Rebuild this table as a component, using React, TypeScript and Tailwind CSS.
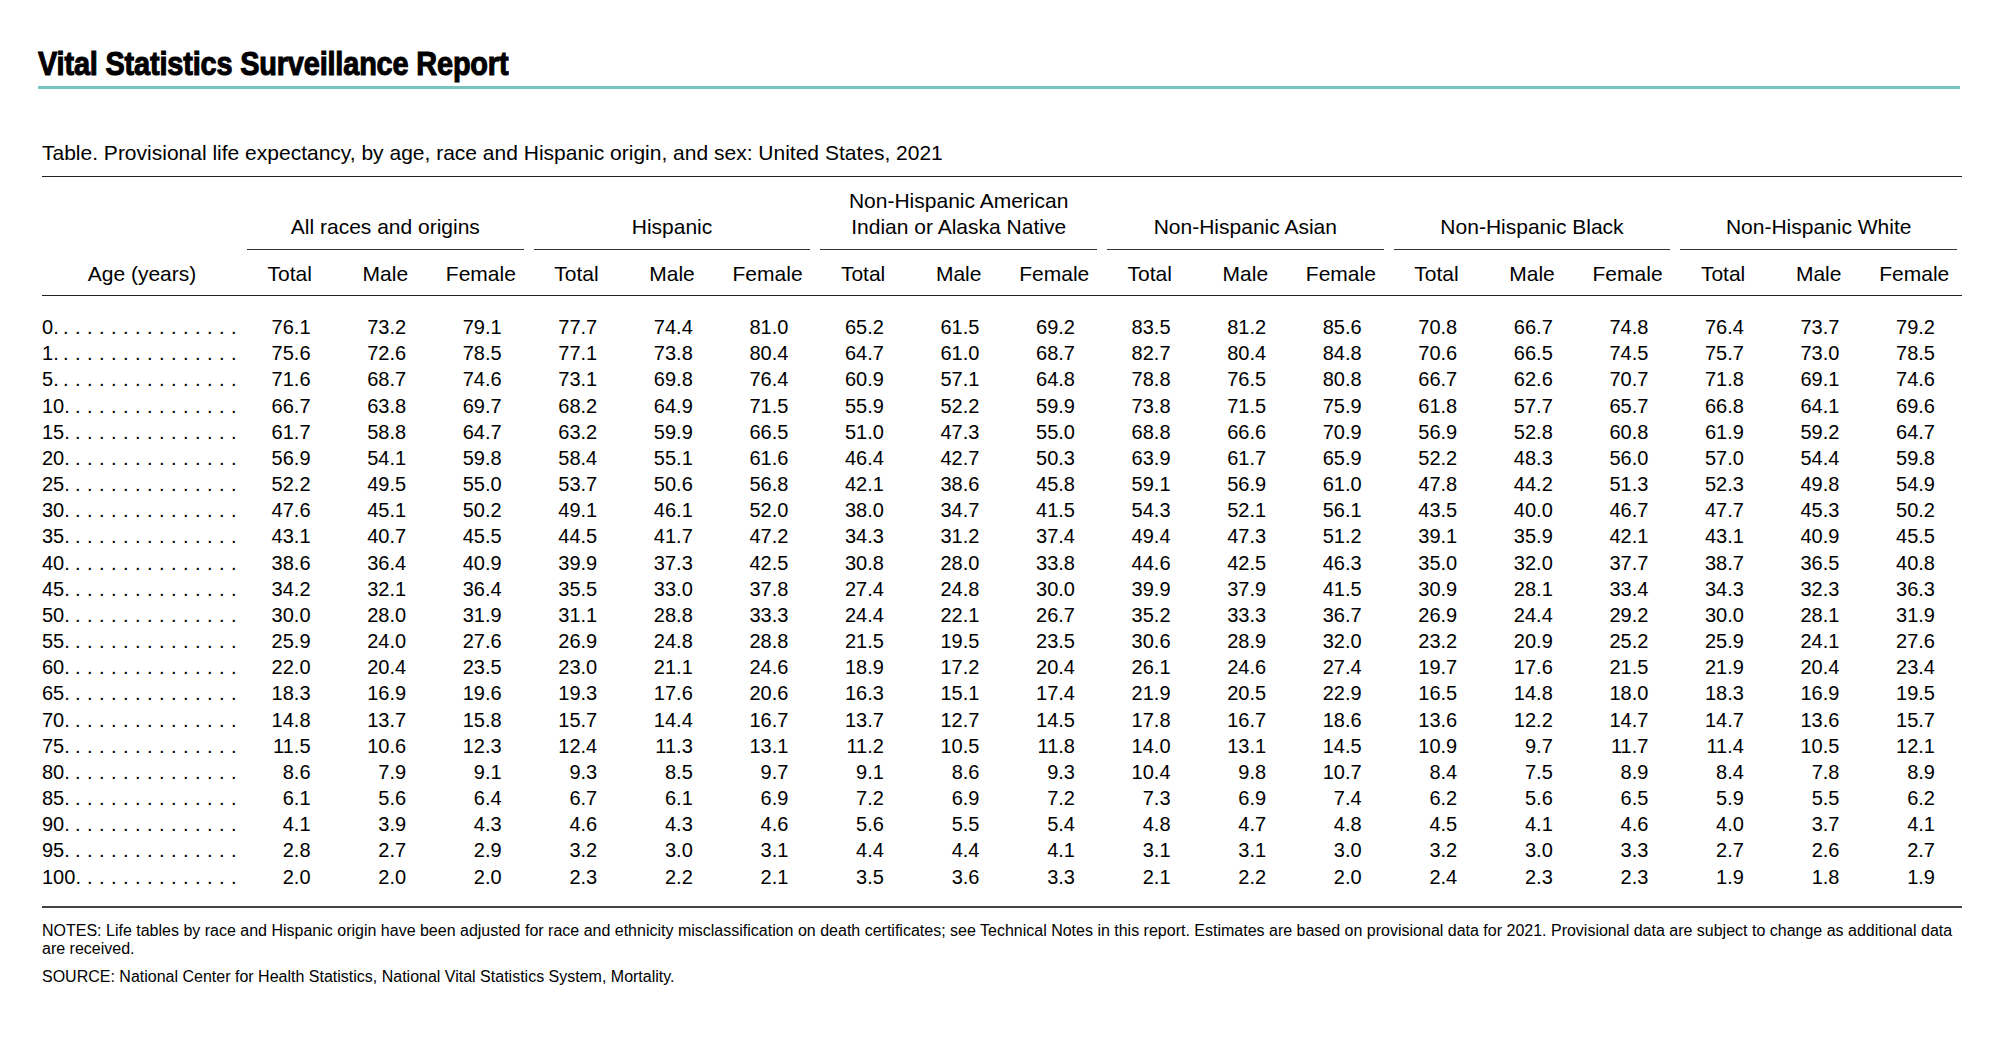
import React from 'react';

const groups = [
  ['All races and origins'],
  ['Hispanic'],
  ['Non-Hispanic American', 'Indian or Alaska Native'],
  ['Non-Hispanic Asian'],
  ['Non-Hispanic Black'],
  ['Non-Hispanic White'],
];

const rows: [string, string][] = [
  ['0', '76.1 73.2 79.1 77.7 74.4 81.0 65.2 61.5 69.2 83.5 81.2 85.6 70.8 66.7 74.8 76.4 73.7 79.2'],
  ['1', '75.6 72.6 78.5 77.1 73.8 80.4 64.7 61.0 68.7 82.7 80.4 84.8 70.6 66.5 74.5 75.7 73.0 78.5'],
  ['5', '71.6 68.7 74.6 73.1 69.8 76.4 60.9 57.1 64.8 78.8 76.5 80.8 66.7 62.6 70.7 71.8 69.1 74.6'],
  ['10', '66.7 63.8 69.7 68.2 64.9 71.5 55.9 52.2 59.9 73.8 71.5 75.9 61.8 57.7 65.7 66.8 64.1 69.6'],
  ['15', '61.7 58.8 64.7 63.2 59.9 66.5 51.0 47.3 55.0 68.8 66.6 70.9 56.9 52.8 60.8 61.9 59.2 64.7'],
  ['20', '56.9 54.1 59.8 58.4 55.1 61.6 46.4 42.7 50.3 63.9 61.7 65.9 52.2 48.3 56.0 57.0 54.4 59.8'],
  ['25', '52.2 49.5 55.0 53.7 50.6 56.8 42.1 38.6 45.8 59.1 56.9 61.0 47.8 44.2 51.3 52.3 49.8 54.9'],
  ['30', '47.6 45.1 50.2 49.1 46.1 52.0 38.0 34.7 41.5 54.3 52.1 56.1 43.5 40.0 46.7 47.7 45.3 50.2'],
  ['35', '43.1 40.7 45.5 44.5 41.7 47.2 34.3 31.2 37.4 49.4 47.3 51.2 39.1 35.9 42.1 43.1 40.9 45.5'],
  ['40', '38.6 36.4 40.9 39.9 37.3 42.5 30.8 28.0 33.8 44.6 42.5 46.3 35.0 32.0 37.7 38.7 36.5 40.8'],
  ['45', '34.2 32.1 36.4 35.5 33.0 37.8 27.4 24.8 30.0 39.9 37.9 41.5 30.9 28.1 33.4 34.3 32.3 36.3'],
  ['50', '30.0 28.0 31.9 31.1 28.8 33.3 24.4 22.1 26.7 35.2 33.3 36.7 26.9 24.4 29.2 30.0 28.1 31.9'],
  ['55', '25.9 24.0 27.6 26.9 24.8 28.8 21.5 19.5 23.5 30.6 28.9 32.0 23.2 20.9 25.2 25.9 24.1 27.6'],
  ['60', '22.0 20.4 23.5 23.0 21.1 24.6 18.9 17.2 20.4 26.1 24.6 27.4 19.7 17.6 21.5 21.9 20.4 23.4'],
  ['65', '18.3 16.9 19.6 19.3 17.6 20.6 16.3 15.1 17.4 21.9 20.5 22.9 16.5 14.8 18.0 18.3 16.9 19.5'],
  ['70', '14.8 13.7 15.8 15.7 14.4 16.7 13.7 12.7 14.5 17.8 16.7 18.6 13.6 12.2 14.7 14.7 13.6 15.7'],
  ['75', '11.5 10.6 12.3 12.4 11.3 13.1 11.2 10.5 11.8 14.0 13.1 14.5 10.9 9.7 11.7 11.4 10.5 12.1'],
  ['80', '8.6 7.9 9.1 9.3 8.5 9.7 9.1 8.6 9.3 10.4 9.8 10.7 8.4 7.5 8.9 8.4 7.8 8.9'],
  ['85', '6.1 5.6 6.4 6.7 6.1 6.9 7.2 6.9 7.2 7.3 6.9 7.4 6.2 5.6 6.5 5.9 5.5 6.2'],
  ['90', '4.1 3.9 4.3 4.6 4.3 4.6 5.6 5.5 5.4 4.8 4.7 4.8 4.5 4.1 4.6 4.0 3.7 4.1'],
  ['95', '2.8 2.7 2.9 3.2 3.0 3.1 4.4 4.4 4.1 3.1 3.1 3.0 3.2 3.0 3.3 2.7 2.6 2.7'],
  ['100', '2.0 2.0 2.0 2.3 2.2 2.1 3.5 3.6 3.3 2.1 2.2 2.0 2.4 2.3 2.3 1.9 1.8 1.9'],
];

const subCols = ['Total', 'Male', 'Female'];

// dot leaders end at the same spot on every row, so shorter labels get more dots
const leaderFor = (age: string) => Array(16 - age.length).fill('.').join(' ');

const App: React.FC = () => {
  return (
    <div className="min-h-[1046px] w-[2004px] bg-white pl-[38px] font-['Liberation_Sans',Arial,sans-serif] text-black">
      {/* report header */}
      <div className="w-[1922px] pt-[46px]">
        <h1 className="inline-block origin-left scale-x-[0.85] text-[34px] font-bold leading-[34px] tracking-[-0.2px] [-webkit-text-stroke:1.1px_black]">
          Vital Statistics Surveillance Report
        </h1>
        <div className="mt-[4px] h-[3px] bg-[#78c4c0]" />
      </div>

      <div className="ml-[4px] w-[1920px]">
        <p className="mt-[51px] mb-[10px] text-[21px] leading-[26px]">
          Table. Provisional life expectancy, by age, race and Hispanic origin, and sex: United States, 2021
        </p>

        {/* column headers */}
        <div className="grid grid-cols-[200px_repeat(18,minmax(0,1fr))] border-y border-[#222] text-[21px] leading-[26px]">
          <div />
          {groups.map((g, i) => (
            <div key={i} className="col-span-3 mx-[5px] flex flex-col justify-end border-b border-[#333] pt-[11px] pb-[9px] text-center">
              {g.map((line) => (
                <span key={line}>{line}</span>
              ))}
            </div>
          ))}
          <div className="pt-[11px] pb-[8px] text-center">Age (years)</div>
          {groups.flatMap((_, i) =>
            subCols.map((c) => (
              <div key={`${i}-${c}`} className="pt-[11px] pb-[8px] text-center">
                {c}
              </div>
            ))
          )}
        </div>

        {/* body */}
        <div className="border-b-2 border-[#444] pt-[18px] pb-[16px] text-[20px]">
          {rows.map(([age, vals]) => (
            <div key={age} className="grid h-[26.18px] grid-cols-[200px_repeat(18,minmax(0,1fr))] leading-[26.18px]">
              <div className="flex justify-between pr-[5px]">
                <span>{age}.</span>
                <span className="whitespace-pre tracking-[0.44px]">{leaderFor(age)}</span>
              </div>
              {vals.split(' ').map((v, j) => (
                <div key={j} className="pr-[27px] text-right">
                  {v}
                </div>
              ))}
            </div>
          ))}
        </div>

        <div className="pt-[14px] text-[16px] leading-[18.4px]">
          <p className="whitespace-nowrap">
            NOTES: Life tables by race and Hispanic origin have been adjusted for race and ethnicity misclassification on death certificates; see Technical Notes in this report. Estimates are based on provisional data for 2021. Provisional data are subject to change as additional data
            <br />
            are received.
          </p>
          <p className="mt-[9px]">SOURCE: National Center for Health Statistics, National Vital Statistics System, Mortality.</p>
        </div>
      </div>
    </div>
  );
};

export default App;
